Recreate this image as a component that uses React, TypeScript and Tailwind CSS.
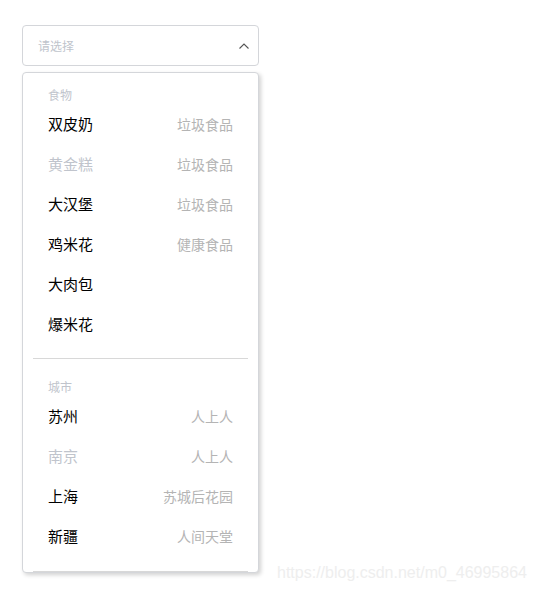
import React from 'react';

type Option = { label: string; desc?: string; disabled?: boolean };
type Group = { label: string; options: Option[] };

const groups: Group[] = [
    {
        label: '食物',
        options: [
            { label: '双皮奶', desc: '垃圾食品' },
            { label: '黄金糕', desc: '垃圾食品', disabled: true },
            { label: '大汉堡', desc: '垃圾食品' },
            { label: '鸡米花', desc: '健康食品' },
            { label: '大肉包' },
            { label: '爆米花' },
        ],
    },
    {
        label: '城市',
        options: [
            { label: '苏州', desc: '人上人' },
            { label: '南京', desc: '人上人', disabled: true },
            { label: '上海', desc: '苏城后花园' },
            { label: '新疆', desc: '人间天堂' },
        ],
    },
];

const font = { fontFamily: '"Noto Sans CJK SC", "Liberation Sans", sans-serif' };

export default function App() {
    return (
        <div className="relative w-[533px] h-[589px] bg-white" style={font}>
            <div className="pt-[25px] pl-[22px]">
                {/* select box */}
                <div className="w-[237px] h-[41px] border border-[#d4d6da] rounded-[4px] flex items-center justify-between pl-[15px] pr-[8px]">
                    <span className="text-[12px] text-[#c0c4cc]">请选择</span>
                    <svg width="12" height="8" viewBox="0 0 12 8" fill="none">
                        <path d="M1.5 6.5 L6 2 L10.5 6.5" stroke="#555" strokeWidth="1.1" />
                    </svg>
                </div>

                {/* dropdown */}
                <div className="mt-[6px] w-[237px] h-[501px] border border-[#d4d6da] rounded-[4px] bg-white shadow-[2px_2px_4px_rgba(0,0,0,0.18)] flex flex-col overflow-hidden">
                    {groups.map((g, gi) => (
                        <div key={g.label} className={gi === 0 ? 'pt-[13px]' : 'pt-[19px]'}>
                            <div className="pl-[25px] h-[18px] leading-[18px] text-[12px] text-[#c0c4cc]">
                                {g.label}
                            </div>
                            {g.options.map((o) => (
                                <div
                                    key={o.label}
                                    className="h-[40px] flex items-center justify-between pl-[25px] pr-[25px]">
                                    <span className={`text-[15px] ${o.disabled ? 'text-[#c0c4cc]' : 'text-black'}`}>
                                        {o.label}
                                    </span>
                                    {o.desc && <span className="text-[14px] text-[#b4b4b4]">{o.desc}</span>}
                                </div>
                            ))}
                            <div className={`${gi === 0 ? 'pt-[14px]' : 'pt-[15px]'} px-[10px]`}>
                                <div className="h-px bg-[#d8d8d8]" />
                            </div>
                        </div>
                    ))}
                </div>
            </div>

            <div
                className="absolute left-[277px] top-[561px] text-[16px] text-[#eeeeee]"
                style={{ fontFamily: '"Liberation Sans", Arial, sans-serif' }}>
                https://blog.csdn.net/m0_46995864
            </div>
        </div>
    );
}
